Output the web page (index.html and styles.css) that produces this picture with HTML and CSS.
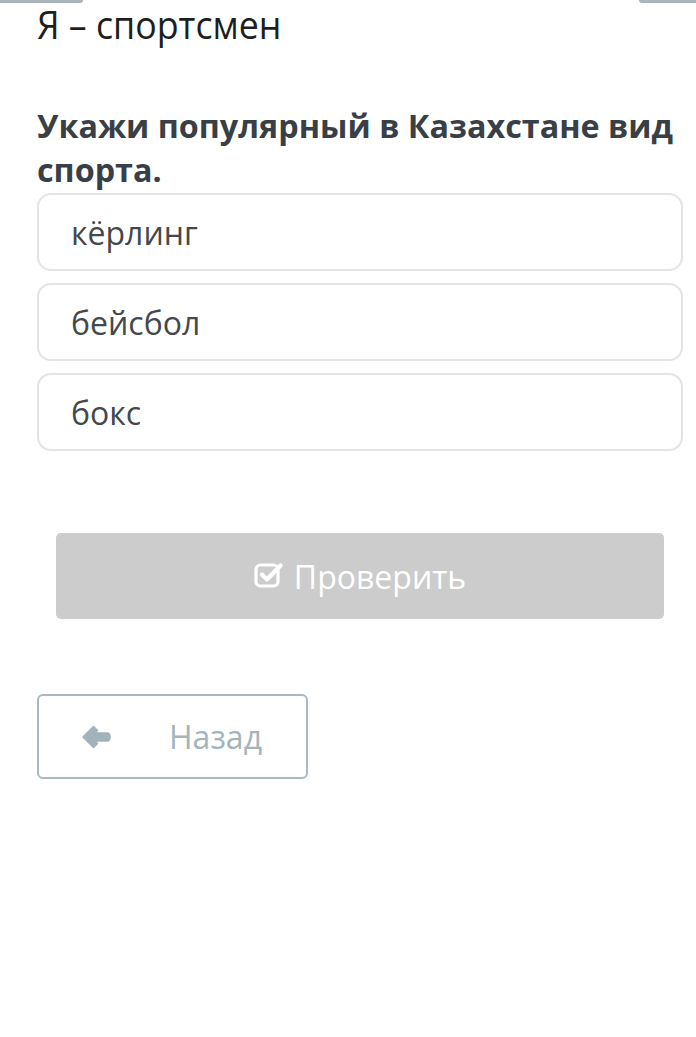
FILE: index.html
```html
<!DOCTYPE html>
<html lang="ru">
<head>
<meta charset="utf-8">
<link rel="stylesheet" href="styles.css">
</head>
<body>
<div class="topbar">
  <div class="tab tab-left"></div>
  <div class="tab tab-right"></div>
</div>
<main class="page">
  <h1 class="title">Я – спортсмен</h1>
  <h2 class="question">Укажи популярный в Казахстане вид спорта.</h2>
  <div class="options">
    <div class="option">кёрлинг</div>
    <div class="option">бейсбол</div>
    <div class="option">бокс</div>
  </div>
  <div class="check-row">
    <button class="check-btn">
      <svg class="check-icon" viewBox="0 0 30 28" width="30" height="28">
        <rect x="2" y="5" width="22" height="21" rx="4.5" fill="none" stroke="#fff" stroke-width="3.2"/>
        <path d="M8 14.5 L13 19.5 L26.5 5.5" fill="none" stroke="#fff" stroke-width="4.4" stroke-linecap="round" stroke-linejoin="round"/>
      </svg>
      <span>Проверить</span>
    </button>
  </div>
  <button class="back-btn">
    <svg class="back-icon" viewBox="0 0 30 28" width="30" height="28">
      <path d="M2 14 L12.5 3.5 L16.5 7.5 L13 10 H26 Q29 10 29 14 Q29 18 26 18 H13 L16.5 20.5 L12.5 24.5 Z" fill="#a3b3bc" stroke="#a3b3bc" stroke-width="1.6" stroke-linejoin="round"/>
    </svg>
    <span>Назад</span>
  </button>
</main>
</body>
</html>
```

FILE: styles.css
```css
html, body {
  margin: 0;
  padding: 0;
  background: #ffffff;
}
body {
  font-family: "Open Sans", "Noto Sans", sans-serif;
  width: 696px;
  height: 1037px;
  overflow: hidden;
}
.topbar {
  display: flex;
  justify-content: space-between;
  height: 4px;
}
.tab {
  height: 3px;
  background: #a9b4bb;
}
.tab-left {
  width: 83px;
  border-bottom-right-radius: 4px;
}
.tab-right {
  width: 57px;
  border-bottom-left-radius: 4px;
}
.page {
  padding: 0 13px 0 37px;
}
.title {
  margin: 0;
  font-weight: 400;
  font-size: 38px;
  line-height: 40px;
  color: #1e1e1e;
  transform: scaleX(0.94);
  transform-origin: left center;
  white-space: nowrap;
}
.question {
  margin: 59px 0 2px 0;
  font-weight: 700;
  font-size: 32.3px;
  line-height: 44px;
  color: #393f46;
}
.options {
  display: flex;
  flex-direction: column;
  gap: 12px;
}
.option {
  height: 74px;
  border: 2px solid #e4e4e4;
  border-radius: 14px;
  display: flex;
  align-items: center;
  padding-left: 32px;
  font-size: 32px;
  color: #44484d;
}
.check-row {
  padding: 82px 19px 0 19px;
}
.check-btn {
  width: 100%;
  height: 86px;
  border: none;
  border-radius: 5px;
  background: #cccccc;
  color: #ffffff;
  font-family: inherit;
  font-size: 32px;
  display: flex;
  align-items: center;
  justify-content: center;
  gap: 10px;
  padding: 0;
}
.check-icon {
  display: block;
  flex: none;
  margin-top: -4px;
}
.back-btn {
  margin-top: 75px;
  width: 271px;
  height: 85px;
  border: 2px solid #aab8c0;
  border-radius: 6px;
  background: #ffffff;
  color: #a5b4bc;
  font-family: inherit;
  font-size: 32px;
  display: flex;
  align-items: center;
  padding: 0 0 0 42px;
  gap: 58px;
}
.back-icon {
  display: block;
  flex: none;
}
```
